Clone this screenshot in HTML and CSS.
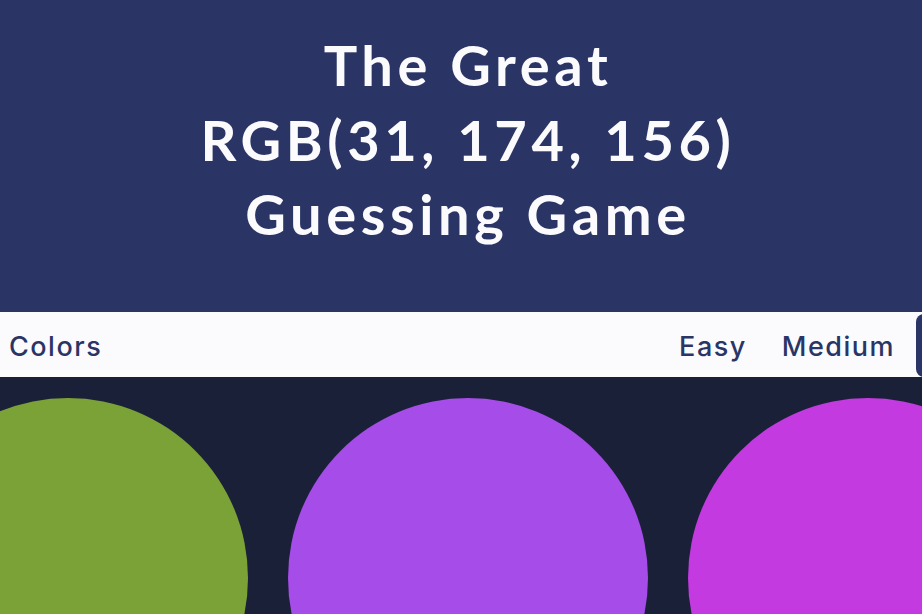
FILE: index.html
```html
<!DOCTYPE html>
<html lang="en">
<head>
<meta charset="utf-8">
<title>The Great RGB Guessing Game</title>
<link rel="stylesheet" href="styles.css">
</head>
<body>
<div class="page">
  <header class="hero">
    <h1 class="title">The Great<br>RGB(31, 174, 156)<br>Guessing Game</h1>
  </header>
  <nav class="bar">
    <span class="bar-label">Colors</span>
    <div class="modes">
      <span class="mode">Easy</span>
      <span class="mode">Medium</span>
      <span class="mode mode-active">Hard</span>
    </div>
  </nav>
  <main class="board">
    <div class="swatch swatch-green"></div>
    <div class="swatch swatch-violet"></div>
    <div class="swatch swatch-magenta"></div>
  </main>
</div>
</body>
</html>
```

FILE: styles.css
```css
html, body {
  margin: 0;
  padding: 0;
  background: #1b2039;
  overflow: hidden;
}

.page {
  width: 936px;
}

.hero {
  background: #2a3565;
  height: 312px;
  box-sizing: border-box;
  padding-top: 28px;
}

.title {
  margin: 0;
  font-family: Lato, "Open Sans", sans-serif;
  font-weight: 700;
  font-size: 56px;
  line-height: 74.5px;
  letter-spacing: 4.6px;
  text-align: center;
  color: #fbfbfe;
}

.bar {
  background: #fbfbfe;
  height: 65px;
  box-sizing: border-box;
  padding: 3px 20px 0 9px;
  display: flex;
  align-items: center;
  justify-content: space-between;
  font-family: Inter, "Noto Sans", sans-serif;
  font-weight: 500;
  font-size: 27px;
  letter-spacing: 1.5px;
  color: #2a3565;
}

.modes {
  display: flex;
  align-items: center;
  gap: 35px;
}

.mode-active {
  background: #2a3565;
  color: #fbfbfe;
  height: 63px;
  width: 90px;
  box-sizing: border-box;
  margin: -2px -90px 0 -14px;
  border-radius: 8px;
  display: flex;
  align-items: center;
  padding: 0 14px;
}

.board {
  display: flex;
  justify-content: center;
  gap: 40px;
  padding-top: 21px;
}

.swatch {
  flex: none;
  width: 360px;
  height: 360px;
  border-radius: 50%;
}

.swatch-green { background: #7ba236; }
.swatch-violet { background: #a64ce8; }
.swatch-magenta { background: #c23ae0; }
```
